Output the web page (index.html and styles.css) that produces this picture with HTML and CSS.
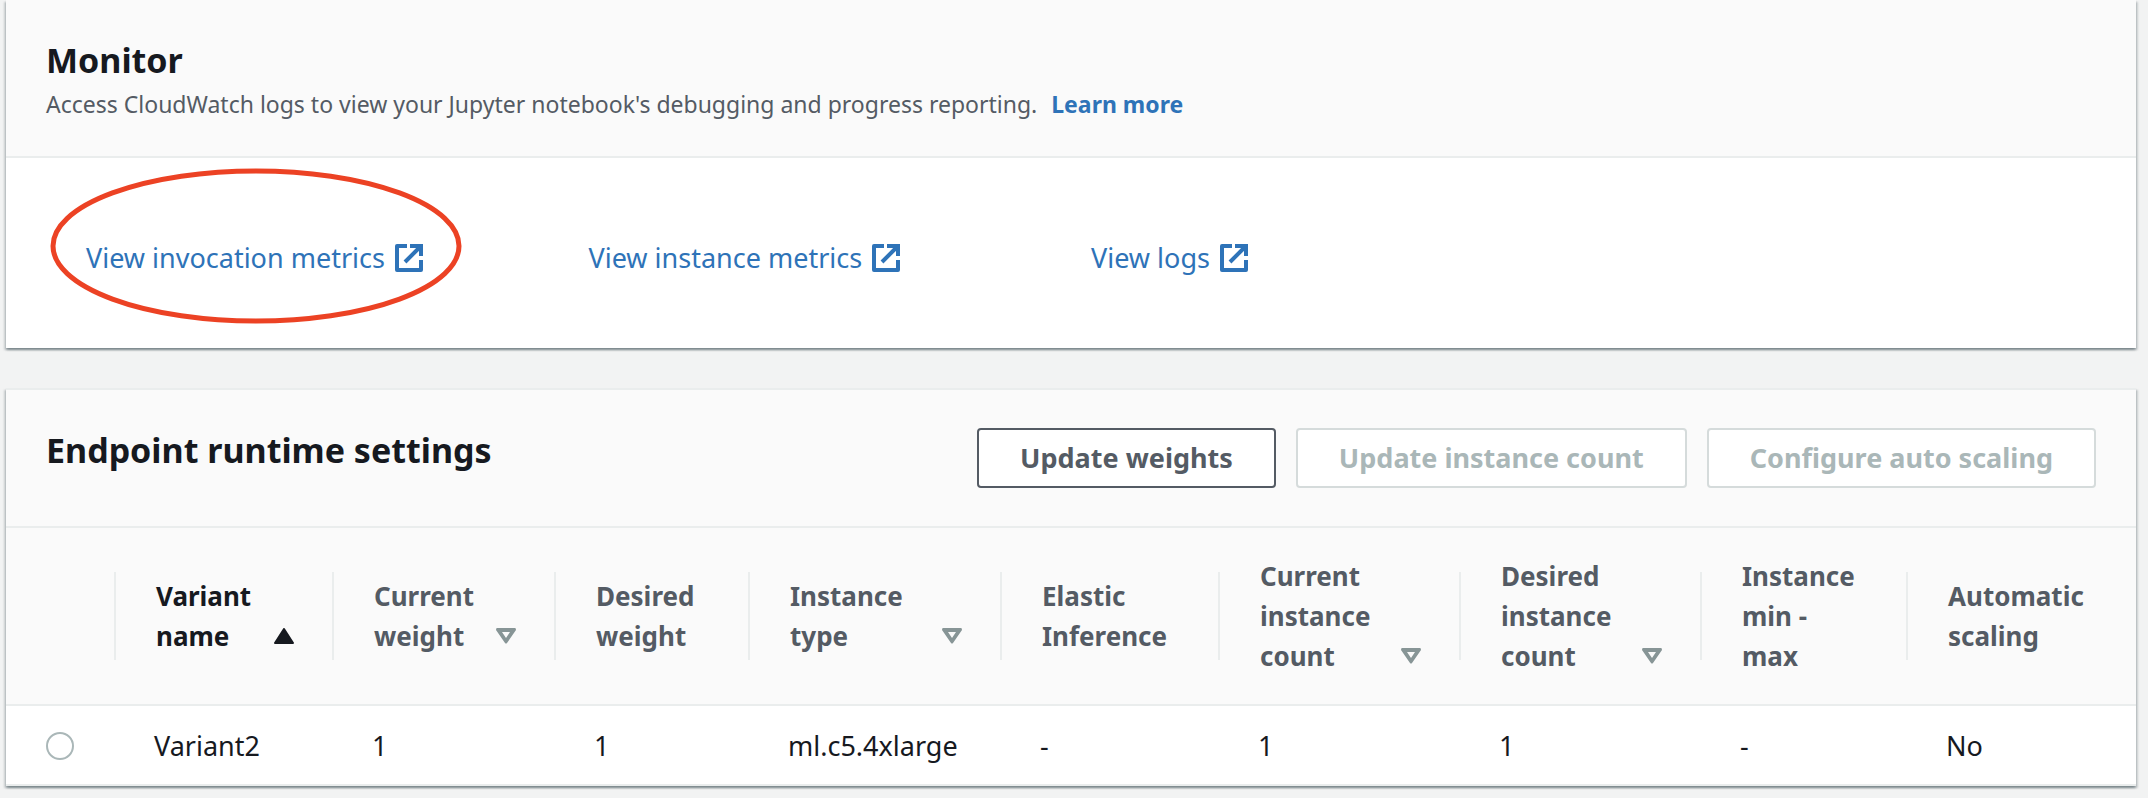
FILE: index.html
```html
<!DOCTYPE html>
<html lang="en">
<head>
<meta charset="utf-8">
<title>Endpoint</title>
<link rel="stylesheet" href="styles.css">
</head>
<body>
<svg class="sprite" aria-hidden="true">
  <symbol id="external" viewBox="0 0 28 28">
    <path d="M12 2H2v24h24V16" fill="none" stroke="currentColor" stroke-width="4" stroke-linejoin="round"/>
    <path d="M15 2h11v10M25 3 10 18" fill="none" stroke="currentColor" stroke-width="4"/>
  </symbol>
  <symbol id="sort-up" viewBox="0 0 20 16">
    <path d="M10 1 19 15H1z" fill="currentColor" stroke="currentColor" stroke-width="2" stroke-linejoin="round"/>
  </symbol>
  <symbol id="sort-down" viewBox="0 0 20 16">
    <path d="M1 0h18q1 0 1 2l-9 13q-1 1-2 0L0 2Q0 0 1 0zM6 4l4 6 4-6z" fill="currentColor" fill-rule="evenodd"/>
  </symbol>
</svg>
<main class="page">
  <section class="panel monitor">
    <header class="panel-header">
      <div>
        <h2 class="title">Monitor</h2>
        <p class="description">Access CloudWatch logs to view your Jupyter notebook's debugging and progress reporting. <a class="learn" href="#">Learn more</a></p>
      </div>
    </header>
    <div class="links">
      <div class="link-cell">
        <a class="link" href="#">View invocation metrics <svg class="external"><use href="#external"/></svg></a>
        <svg class="highlight" viewBox="0 0 412 156" aria-hidden="true"><ellipse cx="206" cy="78" rx="203" ry="75" fill="none" stroke="#ec4224" stroke-width="5"/></svg>
      </div>
      <div class="link-cell"><a class="link" href="#">View instance metrics <svg class="external"><use href="#external"/></svg></a></div>
      <div class="link-cell"><a class="link" href="#">View logs <svg class="external"><use href="#external"/></svg></a></div>
    </div>
  </section>

  <section class="panel">
    <header class="panel-header">
      <h2 class="title">Endpoint runtime settings</h2>
      <div class="actions">
        <button class="button" type="button">Update weights</button>
        <button class="button" type="button" disabled>Update instance count</button>
        <button class="button" type="button" disabled>Configure auto scaling</button>
      </div>
    </header>
    <table class="variants">
      <colgroup>
        <col class="col-select"><col class="col-name"><col class="col-weight"><col class="col-desired"><col class="col-type"><col class="col-elastic"><col class="col-count"><col class="col-count"><col class="col-range"><col class="col-scaling">
      </colgroup>
      <thead>
        <tr>
          <th scope="col" aria-label="Selection"></th>
          <th scope="col" aria-sort="ascending"><button class="sort sorted" type="button"><span>Variant<br>name</span><svg class="arrow"><use href="#sort-up"/></svg></button></th>
          <th scope="col"><button class="sort" type="button"><span>Current<br>weight</span><svg class="arrow"><use href="#sort-down"/></svg></button></th>
          <th scope="col">Desired<br>weight</th>
          <th scope="col"><button class="sort" type="button"><span>Instance<br>type</span><svg class="arrow"><use href="#sort-down"/></svg></button></th>
          <th scope="col">Elastic<br>Inference</th>
          <th scope="col"><button class="sort" type="button"><span>Current<br>instance<br>count</span><svg class="arrow"><use href="#sort-down"/></svg></button></th>
          <th scope="col"><button class="sort" type="button"><span>Desired<br>instance<br>count</span><svg class="arrow"><use href="#sort-down"/></svg></button></th>
          <th scope="col">Instance<br>min -<br>max</th>
          <th scope="col">Automatic<br>scaling</th>
        </tr>
      </thead>
      <tbody>
        <tr>
          <td><input class="radio" type="radio" name="variant" aria-label="Variant2"></td>
          <td>Variant2</td>
          <td>1</td>
          <td>1</td>
          <td>ml.c5.4xlarge</td>
          <td>-</td>
          <td>1</td>
          <td>1</td>
          <td>-</td>
          <td>No</td>
        </tr>
      </tbody>
    </table>
  </section>
</main>
</body>
</html>
```
FILE: styles.css
```css
* { box-sizing: border-box; }

body {
  margin: 0;
  background: #f2f3f3;
  color: #16191f;
  font: 27px/40px "Noto Sans", "Open Sans", sans-serif;
}

.sprite { display: none; }

.page {
  display: flex;
  flex-direction: column;
  gap: 40px;
  padding: 0 12px 12px 6px;
}

.panel {
  background: #fff;
  border-top: 2px solid #eaeded;
  box-shadow:
    0 2px 2px 0 rgba(0, 28, 36, .3),
    2px 2px 2px 0 rgba(0, 28, 36, .15),
    -2px 2px 2px 0 rgba(0, 28, 36, .15);
}

.monitor { border-top: 0; }

.panel-header {
  display: flex;
  justify-content: space-between;
  align-items: flex-start;
  gap: 20px;
  padding: 38px 40px;
  background: #fafafa;
  border-bottom: 2px solid #eaeded;
}

.monitor .panel-header { padding-bottom: 34px; }

.title {
  margin: 0;
  font-size: 34px;
  line-height: 44px;
  font-weight: 700;
}

.description {
  margin: 4px 0 0;
  color: #545b64;
  font-size: 23px;
  line-height: 36px;
}

.learn {
  margin-left: 8px;
  color: #2e73b8;
  font-weight: 700;
  text-decoration: none;
}

.links {
  display: grid;
  grid-template-columns: repeat(4, 1fr);
  padding: 80px 40px 70px 80px;
}

.link-cell { position: relative; }

.link {
  display: inline-flex;
  align-items: center;
  gap: 10px;
  color: #2e73b8;
  text-decoration: none;
}

.external { width: 28px; height: 28px; }

.highlight {
  position: absolute;
  left: -36px;
  top: -70px;
  width: 412px;
  height: 156px;
  pointer-events: none;
}

.actions { display: flex; gap: 20px; }

.button {
  height: 60px;
  padding: 0 41px;
  border: 2px solid #545b64;
  border-radius: 4px;
  background: #fff;
  color: #545b64;
  font: inherit;
  font-weight: 700;
}

.button:disabled { border-color: #d5dbdb; color: #aab7b8; }

.variants {
  width: 100%;
  table-layout: fixed;
  border-collapse: separate;
  border-spacing: 0;
}

.col-select { width: 108px; }
.col-name { width: 218px; }
.col-weight { width: 222px; }
.col-desired { width: 194px; }
.col-type { width: 252px; }
.col-elastic { width: 218px; }
.col-count { width: 241px; }
.col-range { width: 206px; }
.col-scaling { width: 230px; }

.variants th {
  padding: 28px 38px 28px 42px;
  background: #fafafa linear-gradient(#eaeded, #eaeded) no-repeat left center / 2px 50%;
  border-bottom: 2px solid #eaeded;
  color: #545b64;
  font-size: 26px;
  font-weight: 700;
  text-align: left;
}

.variants th:first-child { background-image: none; }

.variants td {
  height: 80px;
  padding: 2px 0 0 40px;
  border-bottom: 2px solid #eaeded;
}

.sort {
  display: flex;
  justify-content: space-between;
  align-items: flex-end;
  width: 100%;
  padding: 0;
  border: 0;
  background: none;
  color: inherit;
  font: inherit;
  text-align: left;
}

.sorted { color: #16191f; }

.arrow {
  width: 20px;
  height: 16px;
  margin-bottom: 12px;
  color: #879596;
}

.sorted .arrow { color: #16191f; }

.radio {
  display: block;
  appearance: none;
  width: 28px;
  height: 28px;
  margin: 0;
  border: 2px solid #aab7b8;
  border-radius: 50%;
  background: #fff;
}
```
